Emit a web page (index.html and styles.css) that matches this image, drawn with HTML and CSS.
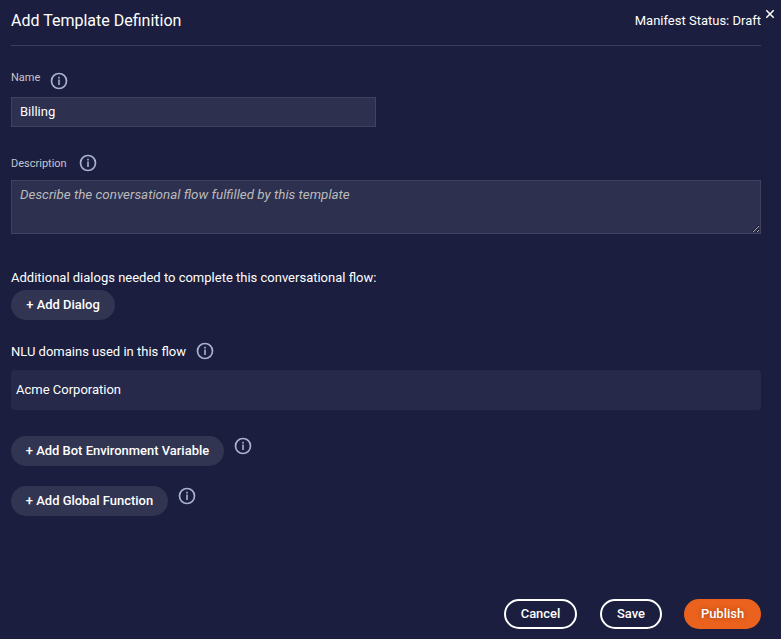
FILE: index.html
```html
<!DOCTYPE html>
<html lang="en">
<head>
<meta charset="utf-8">
<title>Add Template Definition</title>
<link rel="stylesheet" href="styles.css">
</head>
<body>
<svg class="defs" width="0" height="0" aria-hidden="true">
  <symbol id="info" viewBox="0 0 18 18">
    <circle cx="9" cy="9" r="7.5" fill="none" stroke="currentColor" stroke-width="1.7"/>
    <path d="M9 7.6v5.4M9 4.8v1.7" fill="none" stroke="currentColor" stroke-width="1.6"/>
  </symbol>
</svg>
<main class="dialog">
  <button class="close" aria-label="Close"><svg viewBox="0 0 10 10"><path d="M1.3 1.3l7.4 7.4M8.7 1.3L1.3 8.7"/></svg></button>
  <header class="header">
    <h1 class="title">Add Template Definition</h1>
    <span class="status">Manifest Status: Draft</span>
  </header>
  <section class="field name-field">
    <div class="label-row"><label class="label" for="name">Name</label><svg class="info"><use href="#info"/></svg></div>
    <input class="control name-input" id="name" value="Billing">
  </section>
  <section class="field description-field">
    <div class="label-row"><label class="label" for="description">Description</label><svg class="info"><use href="#info"/></svg></div>
    <textarea class="control description-input" id="description" placeholder="Describe the conversational flow fulfilled by this template"></textarea>
  </section>
  <section class="dialogs">
    <p class="text dialogs-text">Additional dialogs needed to complete this conversational flow:</p>
    <button class="button add dialog-add">+ Add Dialog</button>
  </section>
  <section class="domains">
    <div class="domains-heading"><span class="text domains-text">NLU domains used in this flow</span><svg class="info"><use href="#info"/></svg></div>
    <div class="text domain">Acme Corporation</div>
  </section>
  <div class="action-row"><button class="button add variable-add">+ Add Bot Environment Variable</button><svg class="info"><use href="#info"/></svg></div>
  <div class="action-row"><button class="button add function-add">+ Add Global Function</button><svg class="info"><use href="#info"/></svg></div>
  <footer class="footer">
    <button class="button outline cancel">Cancel</button>
    <button class="button outline save">Save</button>
    <button class="button publish">Publish</button>
  </footer>
</main>
</body>
</html>
```
FILE: styles.css
```css
* { box-sizing: border-box; }
body { margin: 0; background: #1b1e3e; color: #fff; font: 13px/20px Roboto, sans-serif; }
.defs { display: block; }
.dialog { position: relative; display: flex; flex-direction: column; height: 639px; padding: 0 20px 10px 11px; }
.close { position: absolute; top: 9px; right: 6px; width: 10px; height: 10px; padding: 0; border: 0; background: none; }
.close svg { display: block; width: 10px; height: 10px; stroke: #fff; stroke-width: 1.5; fill: none; }
.header { display: flex; justify-content: space-between; height: 46px; padding-top: 10px; border-bottom: 1px solid #3c3e5b; }
.title { margin: 0; font-size: 16px; font-weight: 400; line-height: 21px; }
.status { line-height: 21px; }
.label-row { display: flex; }
.label { width: 29px; color: #c6c6cd; font-size: 11px; line-height: 18px; white-space: nowrap; }
.description-field .label { width: 56px; }
.info { display: block; flex: none; width: 18px; height: 18px; color: #a9b0d0; }
.name-field { height: 81px; padding-top: 23px; }
.name-field .label-row { height: 28px; gap: 10px; }
.name-field .info { margin-top: 3px; }
.control { display: block; margin: 0; padding: 0 8px; border: 1px solid #40425f; border-radius: 0; outline: 0; background: #2d304f; color: #fff; font: inherit; }
.name-input { width: 365px; height: 30px; padding-bottom: 1px; }
.description-field { height: 107px; padding-top: 28px; }
.description-field .label-row { height: 25px; gap: 12px; }
.description-field .info { margin-top: -1px; }
.description-input { width: 750px; height: 54px; padding-top: 4px; font-size: 13.4px; }
.description-input::placeholder { color: #bbb; font-style: italic; }
.text { margin: 0; }
.dialogs { margin-top: 34px; }
.dialogs-text { height: 22px; }
.button { height: 30px; padding: 0; border: 0; border-radius: 15px; color: #fff; font: 500 12.95px/28px Roboto, sans-serif; white-space: nowrap; }
.add { display: block; background: #323552; }
.dialog-add { width: 104px; }
.variable-add { width: 213px; }
.function-add { width: 157px; }
.domains { margin-top: 22px; }
.domains-heading { display: flex; gap: 10px; height: 28px; }
.domains-text { width: 175px; white-space: nowrap; }
.domain { height: 40px; padding: 10px 5px; border-radius: 4px; background: #26294a; }
.action-row { display: flex; gap: 10px; height: 30px; margin-top: 26px; }
.action-row .info { margin-top: 1px; }
.action-row + .action-row { margin-top: 20px; }
.footer { display: flex; justify-content: flex-end; margin-top: auto; }
.outline { border: 2px solid #fff; background: transparent; padding-bottom: 1px; line-height: 24px; }
.cancel { width: 73px; margin-right: 23px; }
.save { width: 62px; margin-right: 22px; }
.publish { width: 77px; background: #eb621e; text-shadow: 0 0 5px rgb(0 0 0 / .35); }
```
